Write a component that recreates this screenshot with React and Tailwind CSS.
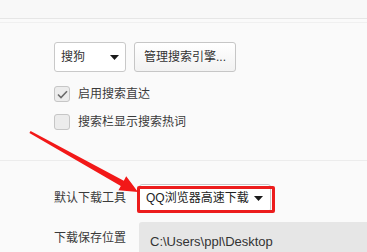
const cjk = { fontFamily: '"Liberation Sans", "Noto Sans CJK SC", sans-serif' }

function Caret({ className = '' }) {
  return (
    <svg width="9" height="5" viewBox="0 0 9 5" className={className}>
      <path d="M0 0 L9 0 L4.5 5 Z" fill="#1a1a1a" />
    </svg>
  )
}

function Checkbox({ checked, label }) {
  return (
    <div className="flex items-center h-[16px]">
      <div className="w-[16px] h-[16px] rounded-[3px] border border-[#c6c6c6] bg-[#ececec] flex items-center justify-center">
        {checked && (
          <svg width="11" height="9" viewBox="0 0 11 9">
            <path d="M1 4.5 L4 7.5 L10 1.2" fill="none" stroke="#6b6b6b" strokeWidth="1.6" />
          </svg>
        )}
      </div>
      <span className="ml-[8px] text-[12px] text-[#3a3a3a] leading-none">{label}</span>
    </div>
  )
}

export default function App() {
  return (
    <div className="relative w-[367px] h-[252px] overflow-hidden bg-[#fafafa]" style={cjk}>
      {/* top strip */}
      <div className="h-[19px] bg-[#f8f8f8] border-b border-[#e6e6e6]" />
      <div className="h-[4px] border-b border-[#f0f0f0]" />

      {/* search section */}
      <div className="h-[137px] pl-[54px] pt-[19px]">
        <div className="flex gap-[8px]">
          <div className="w-[72px] h-[30px] bg-white border border-[#c9c9c9] rounded-[3px] flex items-center justify-between pl-[6px] pr-[6px]">
            <span className="text-[12px] text-[#333]">搜狗</span>
            <Caret />
          </div>
          <div className="w-[102px] h-[30px] bg-gradient-to-b from-white to-[#f2f2f2] border border-[#c6c6c6] rounded-[3px] flex items-center justify-center">
            <span className="text-[12px] text-[#333]">管理搜索引擎...</span>
          </div>
        </div>
        <div className="mt-[14px] flex flex-col gap-[12px]">
          <Checkbox checked label="启用搜索直达" />
          <Checkbox label="搜索栏显示搜索热词" />
        </div>
      </div>

      {/* download section */}
      <div className="border-t border-[#ececec] pl-[54px] pt-[23px]">
        <div className="flex items-center">
          <span className="w-[85px] text-[12px] text-[#3a3a3a]">默认下载工具</span>
          <div className="w-[132px] h-[28px] bg-white border border-[#c9c9c9] rounded-[3px] flex items-center justify-between pl-[6px] pr-[7px]">
            <span className="text-[12px] text-[#222]">QQ浏览器高速下载</span>
            <Caret />
          </div>
        </div>
        <div className="flex items-start mt-[10px]">
          <span className="w-[85px] text-[12px] text-[#3a3a3a] pt-[7px]">下载保存位置</span>
          <div className="flex-1 h-[34px] bg-[#e6e6e6] rounded-tl-[3px] pl-[11px] pt-[7px]">
            <span className="text-[13px] text-[#333]">C:\Users\ppl\Desktop</span>
          </div>
        </div>
      </div>

      {/* annotation: red box + arrow */}
      <div className="absolute left-[137px] top-[186px] w-[138px] h-[27px] border-[3px] border-[#ec1c1c] rounded-[2px]" />
      <svg className="absolute left-0 top-0" width="367" height="252" viewBox="0 0 367 252">
        <polygon
          points="30.6,130.95 123.8,180.7 126.2,176.3 138,192 118.4,190.3 120.8,185.9 29.4,133.05"
          fill="#f21818"
        />
      </svg>
    </div>
  )
}
